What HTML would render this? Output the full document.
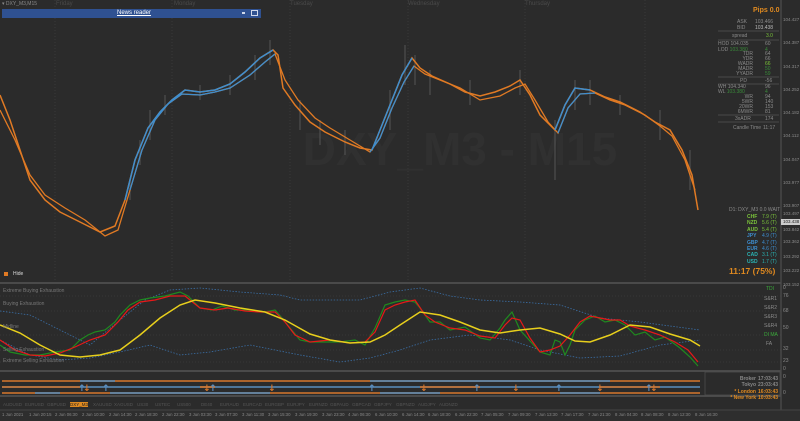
<!DOCTYPE html>
<html><head><meta charset="utf-8"><style>
*{margin:0;padding:0;box-sizing:border-box}
body{width:800px;height:421px;background:#2b2b2b;overflow:hidden;position:relative;font-family:"Liberation Sans",sans-serif}
.t{position:absolute;font-size:5px;color:#8a8a8a;white-space:nowrap}
.s{position:absolute;top:402px;font-size:4.5px;color:#555;white-space:nowrap}
.d{position:absolute;top:412px;font-size:4.3px;color:#888;white-space:nowrap}
</style></head><body>
<svg width="800" height="421" style="position:absolute;left:0;top:0">
<rect x="0" y="0" width="800" height="421" fill="#2b2b2b"/>
<g stroke="#444" stroke-dasharray="1,2" stroke-width="0.6">
<line x1="55" y1="0" x2="55" y2="283"/><line x1="172" y1="0" x2="172" y2="283"/><line x1="290" y1="0" x2="290" y2="283"/><line x1="408" y1="0" x2="408" y2="283"/><line x1="525" y1="0" x2="525" y2="283"/><line x1="645" y1="0" x2="645" y2="283"/>
<line x1="0" y1="296" x2="781" y2="296"/><line x1="0" y1="311" x2="781" y2="311"/><line x1="0" y1="335" x2="781" y2="335"/><line x1="0" y1="350" x2="781" y2="350"/><line x1="0" y1="362" x2="781" y2="362"/>
</g>
<line x1="781" y1="0" x2="781" y2="410" stroke="#555" stroke-width="1"/>
<rect x="0" y="282" width="781" height="2" fill="#4a4a4a"/>
<rect x="0" y="370" width="781" height="2" fill="#4a4a4a"/>
<rect x="0" y="395" width="781" height="2" fill="#4a4a4a"/>
<rect x="0" y="410" width="800" height="11" fill="#2e2e2e"/>
<line x1="0" y1="410" x2="800" y2="410" stroke="#444"/>
<text x="460" y="165" font-family="Liberation Sans" font-size="46" font-weight="bold" fill="#303030" text-anchor="middle">DXY_M3 - M15</text>
<g stroke="#555" stroke-width="1.5" opacity="0.7">
<path d="M130 180 v20 M140 140 v25 M150 110 v30 M165 95 v20 M200 85 v15 M230 75 v20 M255 55 v25 M270 40 v25 M300 100 v30 M320 120 v25 M345 130 v25 M390 90 v40 M405 45 v40 M415 55 v30 M430 70 v25 M470 80 v25 M520 70 v25 M555 120 v60 M575 80 v30 M590 80 v25 M620 95 v20 M660 110 v30 M690 150 v40"/>
</g>
<polyline fill="none" stroke="#e07a24" stroke-width="1.5" points="0,95 10,120 20,150 30,180 45,200 60,212 80,222 100,232 115,226 125,200 135,160 148,128 160,112 172,100 185,90 200,92 215,90 230,84 245,72 260,58 273,50 278,55 283,88 295,105 310,122 325,132 345,142 360,148 372,150 380,130 392,100 402,75 412,58 420,68 432,76 450,84 465,92 480,96 495,92 510,86 520,80 530,95 540,115 555,130 565,105 575,88 590,90 605,97 620,102 640,112 655,122 670,130 682,150 692,175 698,210"/>
<polyline fill="none" stroke="#e07a24" stroke-width="1.3" points="0,110 15,140 30,175 45,195 65,208 85,220 105,236 118,230 130,190 142,150 155,120 168,104 182,94 200,95 215,92 230,88 250,75 265,62 275,54 285,80 298,100 315,118 330,128 350,140 370,152 380,138 392,108 404,82 414,66 425,74 440,80 460,88 480,100 500,96 515,88 525,84 535,100 548,122 558,133 568,108 580,94 595,93 610,100 625,105 645,115 660,126 672,136 685,160 695,190"/>
<polyline fill="none" stroke="#3d8ed0" stroke-width="1.5" points="125,200 135,160 148,128 160,112 172,100 185,90 200,92 215,90 230,84 245,72 260,58 273,50"/>
<polyline fill="none" stroke="#3d8ed0" stroke-width="1.3" points="130,190 142,150 155,120 168,104 182,94 200,95 215,92 230,88 250,75 265,62 275,54"/>
<polyline fill="none" stroke="#3d8ed0" stroke-width="1.5" points="372,150 380,130 392,100 402,75 412,58"/>
<polyline fill="none" stroke="#3d8ed0" stroke-width="1.3" points="370,152 380,138 392,108 404,82 414,66"/>
<polyline fill="none" stroke="#3d8ed0" stroke-width="1.5" points="555,130 565,105 575,88 590,90"/>
<polyline fill="none" stroke="#3d8ed0" stroke-width="1.3" points="558,133 568,108 580,94 595,93"/>
<g fill="none" stroke="#3a6ea5" stroke-width="0.8" stroke-dasharray="1.5,1.5">
<polyline points="0,311 30,315 60,330 90,345 120,320 145,300 170,290 200,288 240,292 280,295 300,300 330,300 360,300 390,292 420,288 450,296 480,300 520,302 560,305 600,318 640,322 670,326 700,330"/>
<polyline points="0,340 30,355 60,360 90,358 120,352 150,345 180,355 210,352 250,345 300,355 340,362 370,358 400,350 430,340 470,335 510,340 540,350 580,358 620,356 660,345 700,340"/>
</g>
<polyline fill="none" stroke="#1f8a1f" stroke-width="1.2" points="0,345 10,352 25,355 40,355 55,352 70,350 80,340 88,335 95,332 105,330 115,322 120,315 130,305 140,300 150,298 165,296 180,292 188,296 200,308 212,310 222,306 235,310 250,310 265,312 275,310 282,318 290,328 300,340 310,342 325,342 340,342 355,340 365,345 375,328 385,305 395,302 405,300 415,302 420,308 430,322 440,322 450,330 465,327 480,338 490,340 500,328 505,320 512,312 520,330 540,352 550,355 555,340 560,342 565,355 570,345 575,330 585,320 595,316 605,322 615,320 625,325 635,335 645,332 655,340 665,337 680,348 690,357 698,366"/>
<polyline fill="none" stroke="#e81818" stroke-width="1.2" points="0,340 15,350 30,355 45,356 60,353 75,347 90,340 105,335 118,322 128,310 140,302 155,300 170,296 185,296 200,308 215,310 228,308 245,311 260,312 275,312 285,322 295,335 310,342 330,340 350,343 365,342 375,332 385,310 395,305 405,302 415,300 425,315 435,322 450,328 465,330 480,336 495,338 505,325 512,318 520,320 530,338 540,352 550,350 560,346 570,335 580,322 590,316 600,318 610,320 620,320 630,326 645,330 660,335 675,342 688,350 698,362"/>
<polyline fill="none" stroke="#e8cf1c" stroke-width="1.5" points="0,325 20,333 40,345 60,355 80,357 100,355 120,350 140,335 160,318 180,305 195,300 215,303 240,308 265,312 285,320 310,334 330,340 350,343 370,342 385,335 400,325 420,312 440,315 460,322 480,330 500,333 520,330 540,328 560,334 575,341 590,342 610,335 630,325 650,327 670,334 690,340 700,346"/>
<g stroke-width="1.6">
<line x1="2" y1="381" x2="700" y2="381" stroke="#d8772c"/>
<line x1="80" y1="381" x2="115" y2="381" stroke="#5b8fc0"/>
<line x1="370" y1="381" x2="610" y2="381" stroke="#5b8fc0"/>
<line x1="2" y1="387" x2="700" y2="387" stroke="#5b8fc0"/>
<line x1="2" y1="387" x2="80" y2="387" stroke="#d8772c"/>
<line x1="200" y1="387" x2="215" y2="387" stroke="#d8772c"/>
<line x1="420" y1="387" x2="480" y2="387" stroke="#d8772c"/>
<line x1="600" y1="387" x2="660" y2="387" stroke="#d8772c"/>
<line x1="2" y1="393" x2="700" y2="393" stroke="#d8772c"/>
<line x1="35" y1="393" x2="60" y2="393" stroke="#5b8fc0"/>
<line x1="110" y1="393" x2="270" y2="393" stroke="#5b8fc0"/>
<line x1="380" y1="393" x2="440" y2="393" stroke="#5b8fc0"/>
<line x1="560" y1="393" x2="600" y2="393" stroke="#5b8fc0"/>
</g>
<rect x="705" y="372" width="75" height="23" fill="none" stroke="#555" stroke-width="0.6"/>
<g font-family="DejaVu Sans" font-size="9" font-weight="bold">
<text x="78" y="391" fill="#5b8fc0">↑</text><text x="83" y="391" fill="#d8772c">↓</text><text x="102" y="391" fill="#5b8fc0">↑</text>
<text x="203" y="391" fill="#d8772c">↓</text><text x="209" y="391" fill="#5b8fc0">↑</text><text x="268" y="391" fill="#d8772c">↓</text>
<text x="368" y="391" fill="#5b8fc0">↑</text><text x="420" y="391" fill="#d8772c">↓</text><text x="473" y="391" fill="#5b8fc0">↑</text>
<text x="512" y="391" fill="#d8772c">↓</text><text x="555" y="391" fill="#5b8fc0">↑</text><text x="596" y="391" fill="#d8772c">↓</text><text x="645" y="391" fill="#5b8fc0">↑</text><text x="650" y="391" fill="#d8772c">↓</text>
</g>
<g stroke="#666" stroke-width="0.6">
<line x1="718" y1="31" x2="779" y2="31"/><line x1="718" y1="40" x2="779" y2="40"/><line x1="718" y1="77" x2="779" y2="77"/><line x1="718" y1="84" x2="779" y2="84"/><line x1="718" y1="115" x2="779" y2="115"/><line x1="718" y1="122" x2="779" y2="122"/>
</g>
</svg>
<div class="t" style="left:2px;top:1px">▾ DXY_M3,M15</div>
<div class="t" style="left:56px;top:1px;color:#4a4a4a;font-size:6px">Friday</div>
<div class="t" style="left:174px;top:1px;color:#4a4a4a;font-size:6px">Monday</div>
<div class="t" style="left:290px;top:1px;color:#4a4a4a;font-size:6px">Tuesday</div>
<div class="t" style="left:408px;top:1px;color:#4a4a4a;font-size:6px">Wednesday</div>
<div class="t" style="left:525px;top:1px;color:#4a4a4a;font-size:6px">Thursday</div>
<div style="position:absolute;left:2px;top:9px;width:259px;height:9px;background:#2f5191"></div>
<div class="t" style="left:117px;top:10px;color:#fff;font-size:6px;text-decoration:underline">News reader</div>
<div style="position:absolute;left:251px;top:10px;width:7px;height:6px;border:1px solid #cfd8ea"></div>
<div style="position:absolute;left:242px;top:12px;width:3px;height:2px;background:#cfd8ea"></div>
<div style="position:absolute;left:4px;top:272px;width:4px;height:4px;background:#e07a24"></div>
<div class="t" style="left:13px;top:271px;color:#ddd">Hide</div>
<div class="t" style="left:753px;top:7px;color:#e08a20;font-size:7px;font-weight:bold">Pips 0.0</div>
<div class="t" style="left:737px;top:19px">ASK</div><div class="t" style="left:755px;top:19px">103.466</div>
<div class="t" style="left:737px;top:25px">BID</div><div class="t" style="left:755px;top:25px;color:#bbb">103.438</div>
<div class="t" style="left:732px;top:33px">spread</div><div class="t" style="left:766px;top:33px;color:#7ac33a">3.0</div>
<div class="t" style="left:718px;top:41px;line-height:6px">HOD 104.035<br>LOD <span style="color:#3a8a3a">103.380</span></div>
<div class="t" style="left:733px;top:52px;line-height:5px;text-align:right;width:20px">TDR<br>YDR<br>WADR<br>MADR<br>YYADR</div>
<div class="t" style="left:765px;top:41px;line-height:6px">60<br><span style="color:#3a8a3a">4</span></div>
<div class="t" style="left:765px;top:52px;line-height:5px">64<br>66<br><span style="color:#7ac33a">66</span><br><span style="color:#3a8a3a">50</span><br><span style="color:#3a8a3a">59</span></div>
<div class="t" style="left:740px;top:78px">PD</div><div class="t" style="left:765px;top:78px">-56</div>
<div class="t" style="left:718px;top:85px;line-height:5px">WH 104.340<br>WL <span style="color:#3a8a3a">103.380</span></div>
<div class="t" style="left:733px;top:95px;line-height:5px;text-align:right;width:20px">WR<br>5WR<br>20WR<br>6MWR</div>
<div class="t" style="left:765px;top:85px;line-height:5px">96<br><span style="color:#3a8a3a">4</span><br>94<br>140<br>153<br>81</div>
<div class="t" style="left:735px;top:116px">3xADR</div><div class="t" style="left:765px;top:116px">174</div>
<div class="t" style="left:733px;top:125px">Candle Time</div><div class="t" style="left:763px;top:125px">11:17</div>
<div class="t" style="left:729px;top:207px">D1: DXY_M3 0.0 WAIT</div>
<div class="t" style="left:747px;top:214px;line-height:6.4px;font-weight:bold;color:#7ac33a">CHF<br>NZD<br>AUD<br><span style="color:#3d8ed0">JPY<br>GBP<br>EUR</span><br><span style="color:#2ab5b5">CAD<br>USD</span></div>
<div class="t" style="left:762px;top:214px;line-height:6.4px;color:#7ac33a">7.9 (T)<br>5.6 (T)<br>5.4 (T)<br><span style="color:#3d8ed0">4.9 (T)<br>4.7 (T)<br>4.6 (T)</span><br><span style="color:#2ab5b5">3.1 (T)<br>1.7 (T)</span></div>
<div class="t" style="left:729px;top:266px;color:#e08a20;font-size:8.5px;font-weight:bold">11:17 (75%)</div>
<div class="t" style="left:783px;top:8px;line-height:23.3px;font-size:4.5px">104.427<br>104.387<br>104.317<br>104.252<br>104.182<br>104.112<br>104.047<br>103.977<br>103.907<br>103.842</div>
<div class="t" style="left:783px;top:207px;line-height:14.2px;font-size:4.5px">103.497<br><br>103.362<br>103.292<br>103.222<br>103.152</div>
<div style="position:absolute;left:781px;top:219px;width:19px;height:6px;background:#ccc"></div>
<div class="t" style="left:783px;top:219px;color:#222;font-size:4.5px">103.438</div>
<div class="t" style="left:3px;top:288px;color:#777">Extreme Buying Exhaustion</div>
<div class="t" style="left:3px;top:301px;color:#777">Buying Exhaustion</div>
<div class="t" style="left:3px;top:324px;color:#777">Midline</div>
<div class="t" style="left:3px;top:347px;color:#777">Selling Exhaustion</div>
<div class="t" style="left:3px;top:358px;color:#777">Extreme Selling Exhaustion</div>
<div class="t" style="left:766px;top:286px;color:#3aaa3a">TDI</div>
<div class="t" style="left:764px;top:296px">S&amp;R1</div><div class="t" style="left:764px;top:305px">S&amp;R2</div><div class="t" style="left:764px;top:314px">S&amp;R3</div><div class="t" style="left:764px;top:323px">S&amp;R4</div>
<div class="t" style="left:764px;top:332px;color:#3aaa3a">DI MA</div><div class="t" style="left:766px;top:341px">FA</div>
<div class="t" style="left:783px;top:285px">0</div><div class="t" style="left:783px;top:293px">76</div><div class="t" style="left:783px;top:308px">68</div><div class="t" style="left:783px;top:325px">50</div><div class="t" style="left:783px;top:346px">32</div><div class="t" style="left:783px;top:358px">23</div><div class="t" style="left:783px;top:366px">0</div>
<div class="t" style="left:783px;top:374px">0</div><div class="t" style="left:783px;top:390px">0</div>
<div class="t" style="left:716px;top:376px;line-height:6.3px;text-align:right;font-weight:bold;color:#888;width:40px">Broker<br>Tokyo<br><span style="color:#e08a20">* London<br>* New York</span></div>
<div class="t" style="left:758px;top:376px;line-height:6.3px;font-weight:bold;color:#888">17:03:43<br>23:03:43<br><span style="color:#e08a20">16:03:43<br>10:03:43</span></div>
<div class="s" style="left:3px">AUDUSD</div><div class="s" style="left:25px">EURUSD</div><div class="s" style="left:47px">GBPUSD</div><div class="s" style="left:70px;background:#e08a20;color:#222">DXY_M3</div><div class="s" style="left:93px">XAUUSD</div><div class="s" style="left:114px">XAGUSD</div><div class="s" style="left:137px">US30</div><div class="s" style="left:155px">USTEC</div><div class="s" style="left:177px">US500</div><div class="s" style="left:201px">DE40</div><div class="s" style="left:220px">EURAUD</div><div class="s" style="left:243px">EURCAD</div><div class="s" style="left:265px">EURGBP</div><div class="s" style="left:287px">EURJPY</div><div class="s" style="left:309px">EURNZD</div><div class="s" style="left:330px">GBPAUD</div><div class="s" style="left:352px">GBPCAD</div><div class="s" style="left:374px">GBPJPY</div><div class="s" style="left:396px">GBPNZD</div><div class="s" style="left:418px">AUDJPY</div><div class="s" style="left:439px">AUDNZD</div>
<div class="d" style="left:2px">1 Jun 2021</div><div class="d" style="left:29px">1 Jun 20:15</div><div class="d" style="left:55px">2 Jun 06:30</div><div class="d" style="left:82px">2 Jun 10:30</div><div class="d" style="left:109px">2 Jun 14:30</div><div class="d" style="left:135px">2 Jun 18:30</div><div class="d" style="left:162px">2 Jun 22:30</div><div class="d" style="left:189px">3 Jun 03:30</div><div class="d" style="left:215px">3 Jun 07:30</div><div class="d" style="left:242px">3 Jun 11:30</div><div class="d" style="left:268px">3 Jun 15:30</div><div class="d" style="left:295px">3 Jun 19:30</div><div class="d" style="left:322px">3 Jun 23:30</div><div class="d" style="left:348px">4 Jun 06:30</div><div class="d" style="left:375px">6 Jun 10:30</div><div class="d" style="left:402px">6 Jun 14:30</div><div class="d" style="left:428px">6 Jun 18:30</div><div class="d" style="left:455px">6 Jun 22:30</div><div class="d" style="left:481px">7 Jun 05:30</div><div class="d" style="left:508px">7 Jun 09:30</div><div class="d" style="left:535px">7 Jun 13:30</div><div class="d" style="left:561px">7 Jun 17:30</div><div class="d" style="left:588px">7 Jun 21:30</div><div class="d" style="left:615px">8 Jun 04:30</div><div class="d" style="left:641px">8 Jun 08:30</div><div class="d" style="left:668px">8 Jun 12:30</div><div class="d" style="left:695px">8 Jun 16:30</div>
</body></html>
